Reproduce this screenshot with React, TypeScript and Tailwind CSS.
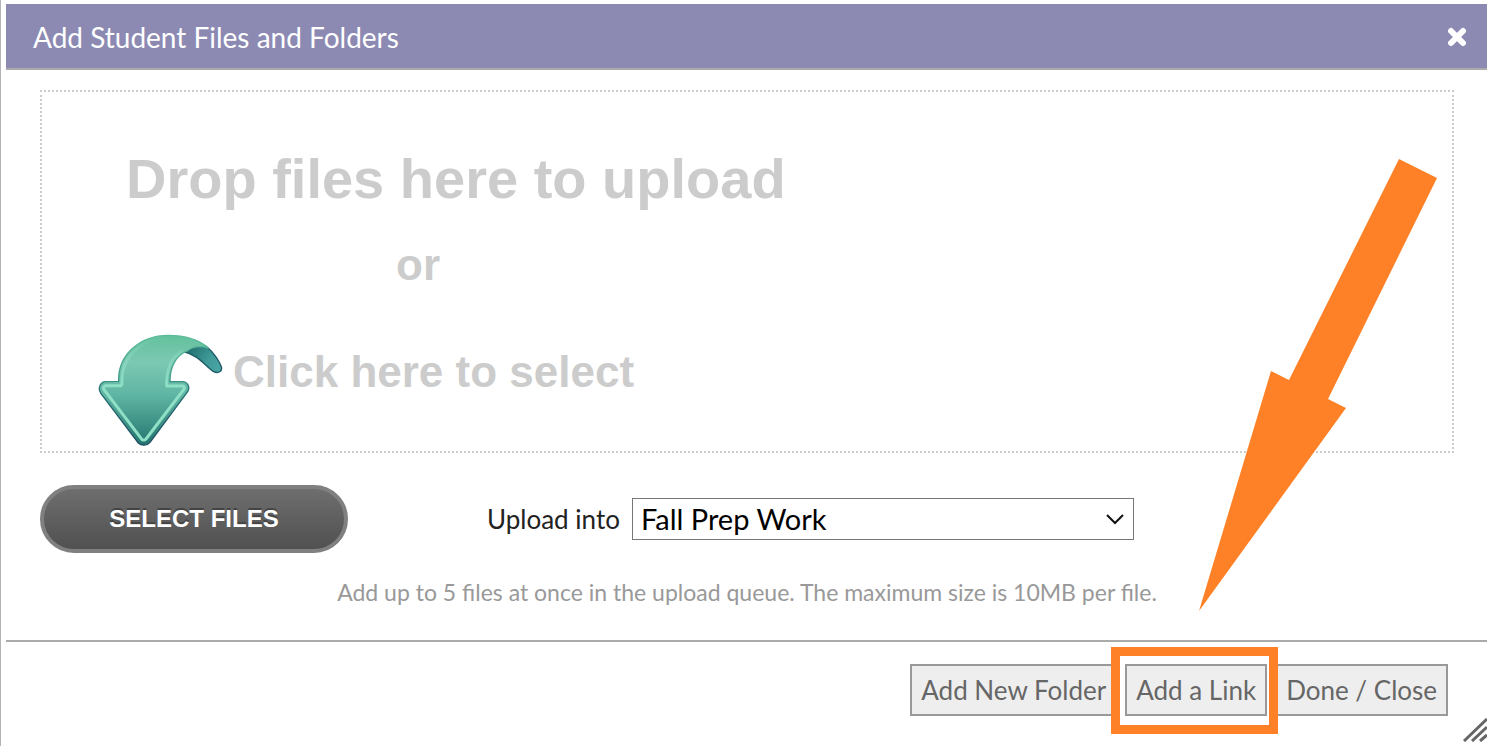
import { useState } from 'react';

const folders = ['Fall Prep Work', 'Homework', 'Projects'];

const CloseIcon = () => (
    <svg className="w-5 h-5" viewBox="0 0 20 20" fill="none" aria-hidden="true">
        <path d="M4 4L16 16M16 4L4 16" stroke="white" strokeWidth="6" strokeLinecap="round" />
    </svg>
);

const DropArrow = () => (
    <svg className="w-[125px] h-[114px] shrink-0" viewBox="25 40 375 342" fill="none" aria-hidden="true">
        <defs>
            <linearGradient id="arrowBody" x1="0" y1="45" x2="0" y2="375" gradientUnits="userSpaceOnUse">
                <stop offset="0" stopColor="#62c19c" />
                <stop offset="0.25" stopColor="#7cc8b2" />
                <stop offset="0.55" stopColor="#5fb5a3" />
                <stop offset="1" stopColor="#23766f" />
            </linearGradient>
            <linearGradient id="arrowTail" x1="290" y1="85" x2="390" y2="155" gradientUnits="userSpaceOnUse">
                <stop offset="0" stopColor="#1f6b6a" />
                <stop offset="0.6" stopColor="#3f9a98" />
                <stop offset="1" stopColor="#4aa5a5" />
            </linearGradient>
            <linearGradient id="arrowEdge" x1="0" y1="45" x2="0" y2="375" gradientUnits="userSpaceOnUse">
                <stop offset="0" stopColor="#5cbd9a" />
                <stop offset="0.4" stopColor="#3f9c88" />
                <stop offset="0.5" stopColor="#256f70" />
                <stop offset="1" stopColor="#1f4a64" />
            </linearGradient>
            <linearGradient id="arrowShine" x1="0" y1="50" x2="0" y2="200" gradientUnits="userSpaceOnUse">
                <stop offset="0" stopColor="#8fe0c6" stopOpacity="0" />
                <stop offset="1" stopColor="#8fe0c6" />
            </linearGradient>
        </defs>
        <path d="M280 96C300 78 330 70 352 82C374 100 390 127 395 141C399 156 386 162 372 156C348 142 330 106 280 96Z" fill="url(#arrowTail)" stroke="#1d5a66" strokeWidth="4" />
        <path
            d="M87 185C84 108 148 47 236 47C290 47 330 62 356 85C332 78 308 82 293 94C262 106 240 138 241 186H282C297 190 301 204 294 216L181 368C172 379 155 379 145 369L34 222C24 207 30 191 44 186Z"
            fill="url(#arrowBody)"
            stroke="url(#arrowEdge)"
            strokeWidth="4"
            strokeLinejoin="round"
        />
        <path
            d="M97 198H48Q39 201 43 210L155 357Q162 365 169 358L282 210Q287 201 279 199H231C229 150 246 110 280 92M97 198C91 118 148 58 230 56"
            stroke="url(#arrowShine)"
            strokeWidth="9"
            strokeLinejoin="round"
        />
    </svg>
);

const ResizeHandle = () => (
    <svg className="w-6 h-6" viewBox="0 0 24 24" fill="none" stroke="#666" strokeWidth="3" aria-hidden="true">
        <path d="M1 23L24 1M9 23L24 9M17 23L24 17" />
    </svg>
);

const footerButton = "h-[52px] px-[9px] border-2 border-[#999] bg-[#eee] text-[26px] leading-8 text-[#666] whitespace-nowrap";

const App = () => {
    const [folder, setFolder] = useState(folders[0]);

    return (
        <div className="min-h-screen border-l border-[#b4b4b4] bg-white pl-[5px] pr-[3px] pt-1 font-['Lato',sans-serif]">
            <header className="flex items-center justify-between h-[66px] pt-0.5 pl-[27px] pr-5 bg-[#8c8ab3] border-b-2 border-[#aaa]">
                <h1 className="text-[28px] leading-9 text-white">Add Student Files and Folders</h1>
                <button type="button" aria-label="Close">
                    <CloseIcon />
                </button>
            </header>

            <main className="pl-[34px] pr-[33px] pt-5">
                <section className="h-[363px] pt-[55px] pl-14 border-2 border-dotted border-[#ccc] font-['Liberation_Sans',sans-serif] font-bold text-[#ccc]">
                    <p className="pl-7 text-[56px] leading-[64px]">Drop files here to upload</p>
                    <p className="mt-7 pl-[298px] text-[44px] leading-[52px]">or</p>
                    <button type="button" className="flex items-start gap-[10px] mt-[42px]">
                        <DropArrow />
                        <span className="pt-[13px] text-[44px] leading-[52px]">Click here to select</span>
                    </button>
                </section>

                <div className="flex items-center mt-8">
                    <button
                        type="button"
                        className="w-[308px] h-[68px] shrink-0 rounded-full border-4 border-[#808080] bg-linear-to-b from-[#707070] to-[#4f4f4f] bg-origin-border font-['Liberation_Sans',sans-serif] text-2xl font-bold text-white [text-shadow:0_-2px_0_#444]"
                    >
                        SELECT FILES
                    </button>
                    <label htmlFor="folder" className="ml-[139px] text-[26px] leading-8 text-[#222] whitespace-nowrap">
                        Upload into
                    </label>
                    <div className="relative flex-1 max-w-[502px] ml-3">
                        <select
                            id="folder"
                            value={folder}
                            onChange={(e) => setFolder(e.target.value)}
                            className="block w-full h-[42px] pl-2 pr-10 appearance-none rounded-none border border-[#767676] bg-white text-[29px] leading-9 text-black"
                        >
                            {folders.map((name) => (
                                <option key={name} value={name}>{name}</option>
                            ))}
                        </select>
                        <svg className="absolute right-2 top-4 w-5 h-3 pointer-events-none" viewBox="0 0 20 12" fill="none" aria-hidden="true">
                            <path d="M1 1L9 9L17 1" stroke="#111" strokeWidth="2" />
                        </svg>
                    </div>
                </div>

                <p className="mt-[23px] text-center text-[23px] leading-8 text-[#999]">
                    Add up to 5 files at once in the upload queue. The maximum size is 10MB per file.
                </p>
            </main>

            <footer className="relative flex justify-end gap-2 mt-8 pt-[22px] pr-[39px] pb-[30px] border-t-2 border-[#aaa]">
                <button type="button" className={footerButton}>Add New Folder</button>
                <div className="relative z-10">
                    <div className="absolute -left-[14px] -right-[11px] -top-[17px] -bottom-[18px] border-[9px] border-[#ff8127] bg-white"></div>
                    <button type="button" className={`relative ${footerButton}`}>Add a Link</button>
                    <svg className="absolute left-[73px] bottom-[104px] w-60 h-[454px] pointer-events-none" viewBox="0 0 240 454" aria-hidden="true">
                        <polygon points="201,1 239,20 130,241 148,250 1,453 73,213 91,222" fill="#ff8127" />
                    </svg>
                </div>
                <button type="button" className={footerButton}>Done / Close</button>
                <div className="absolute right-0 bottom-1">
                    <ResizeHandle />
                </div>
            </footer>
        </div>
    );
};

export default App;
